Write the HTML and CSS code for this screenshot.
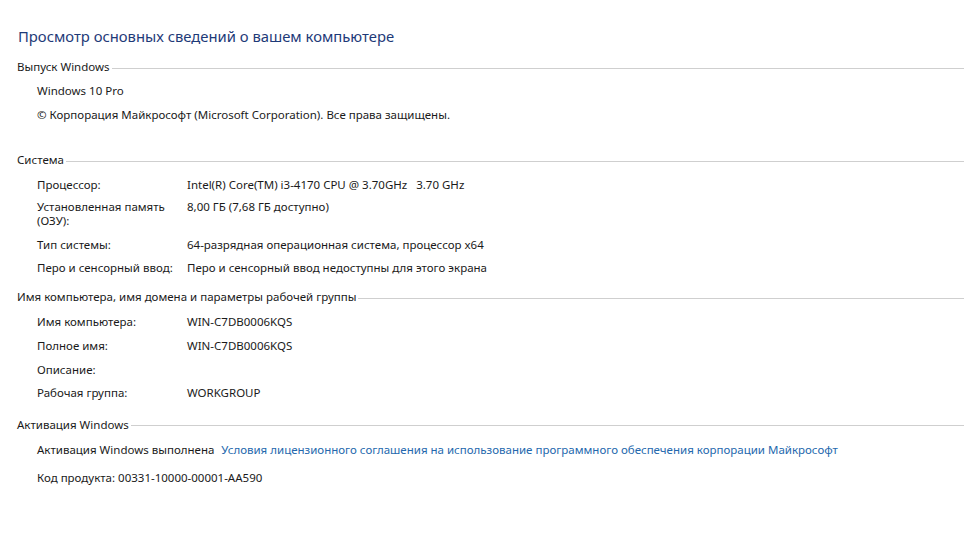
FILE: index.html
```html
<!DOCTYPE html>
<html lang="ru">
<head>
<meta charset="utf-8">
<title>Система</title>
<link rel="stylesheet" href="styles.css">
</head>
<body>
<div class="page">
  <h1 class="title">Просмотр основных сведений о вашем компьютере</h1>

  <section class="sec sec-edition">
    <div class="sec-head"><span class="sec-name">Выпуск Windows</span><span class="sec-line"></span></div>
    <div class="plain plain-first">Windows 10 Pro</div>
    <div class="plain">© Корпорация Майкрософт (Microsoft Corporation). Все права защищены.</div>
  </section>

  <section class="sec sec-system">
    <div class="sec-head"><span class="sec-name">Система</span><span class="sec-line"></span></div>
    <div class="row"><div class="lbl">Процессор:</div><div class="val">Intel(R) Core(TM) i3-4170 CPU @ 3.70GHz&nbsp;&nbsp;&nbsp;3.70 GHz</div></div>
    <div class="row row-ram"><div class="lbl">Установленная память (ОЗУ):</div><div class="val">8,00 ГБ (7,68 ГБ доступно)</div></div>
    <div class="row row-type"><div class="lbl">Тип системы:</div><div class="val">64-разрядная операционная система, процессор x64</div></div>
    <div class="row row-pen"><div class="lbl">Перо и сенсорный ввод:</div><div class="val">Перо и сенсорный ввод недоступны для этого экрана</div></div>
  </section>

  <section class="sec sec-name-grp">
    <div class="sec-head"><span class="sec-name">Имя компьютера, имя домена и параметры рабочей группы</span><span class="sec-line"></span></div>
    <div class="row"><div class="lbl">Имя компьютера:</div><div class="val">WIN-C7DB0006KQS</div></div>
    <div class="row"><div class="lbl">Полное имя:</div><div class="val">WIN-C7DB0006KQS</div></div>
    <div class="row"><div class="lbl">Описание:</div><div class="val"></div></div>
    <div class="row"><div class="lbl">Рабочая группа:</div><div class="val">WORKGROUP</div></div>
  </section>

  <section class="sec sec-act">
    <div class="sec-head"><span class="sec-name">Активация Windows</span><span class="sec-line"></span></div>
    <div class="act-row"><span>Активация Windows выполнена</span><a class="link" href="#">Условия лицензионного соглашения на использование программного обеспечения корпорации Майкрософт</a></div>
    <div class="key-row"><span>Код продукта:</span><span>00331-10000-00001-AA590</span></div>
  </section>
</div>
</body>
</html>
```

FILE: styles.css
```css
html, body {
  margin: 0;
  padding: 0;
  background: #ffffff;
}
body {
  font-family: "Noto Sans", "Open Sans", sans-serif;
  font-size: 11.5px;
  color: #1a1a1a;
  width: 964px;
  height: 546px;
  overflow: hidden;
}
.page {
  padding: 25px 0 0 17px;
}
.title {
  margin: 0 0 0 1px;
  font-weight: normal;
  font-size: 14.8px;
  line-height: 22px;
  color: #1e3a78;
}
.sec-head {
  display: flex;
  align-items: center;
  height: 16px;
}
.sec-name {
  white-space: nowrap;
  line-height: 16px;
}
.sec-line {
  flex: 1;
  height: 1px;
  background: #cfcfcf;
  margin-left: 2px;
  margin-top: 2px;
}
.sec-edition { margin-top: 12.2px; }
.sec-system { margin-top: 29.7px; }
.sec-name-grp { margin-top: 13px; }
.sec-act { margin-top: 15.6px; }

.plain {
  padding-left: 20px;
  line-height: 16px;
  margin-top: 7.3px;
}
.plain-first { margin-top: 8.3px; }

.row {
  display: flex;
  padding-left: 20px;
  margin-top: 7.6px;
  line-height: 16px;
}
.sec-head + .row { margin-top: 8.3px; }
.sec-name-grp .sec-head + .row { margin-top: 9.3px; }
.row .lbl {
  width: 150px;
  flex: none;
  padding-right: 6px;
  box-sizing: border-box;
}
.row .val {
  flex: 1;
  white-space: nowrap;
}
.row-ram { margin-top: 7.7px; line-height: 14px; }
.row-type { margin-top: 9px; }
.row-pen { margin-top: 6.7px; }

.act-row {
  padding-left: 20px;
  margin-top: 9px;
  line-height: 16px;
  display: flex;
  gap: 7px;
  white-space: nowrap;
}
.link {
  color: #2468ad;
  text-decoration: none;
}
.key-row {
  padding-left: 20px;
  margin-top: 12.4px;
  line-height: 16px;
  display: flex;
  gap: 3px;
}
```
